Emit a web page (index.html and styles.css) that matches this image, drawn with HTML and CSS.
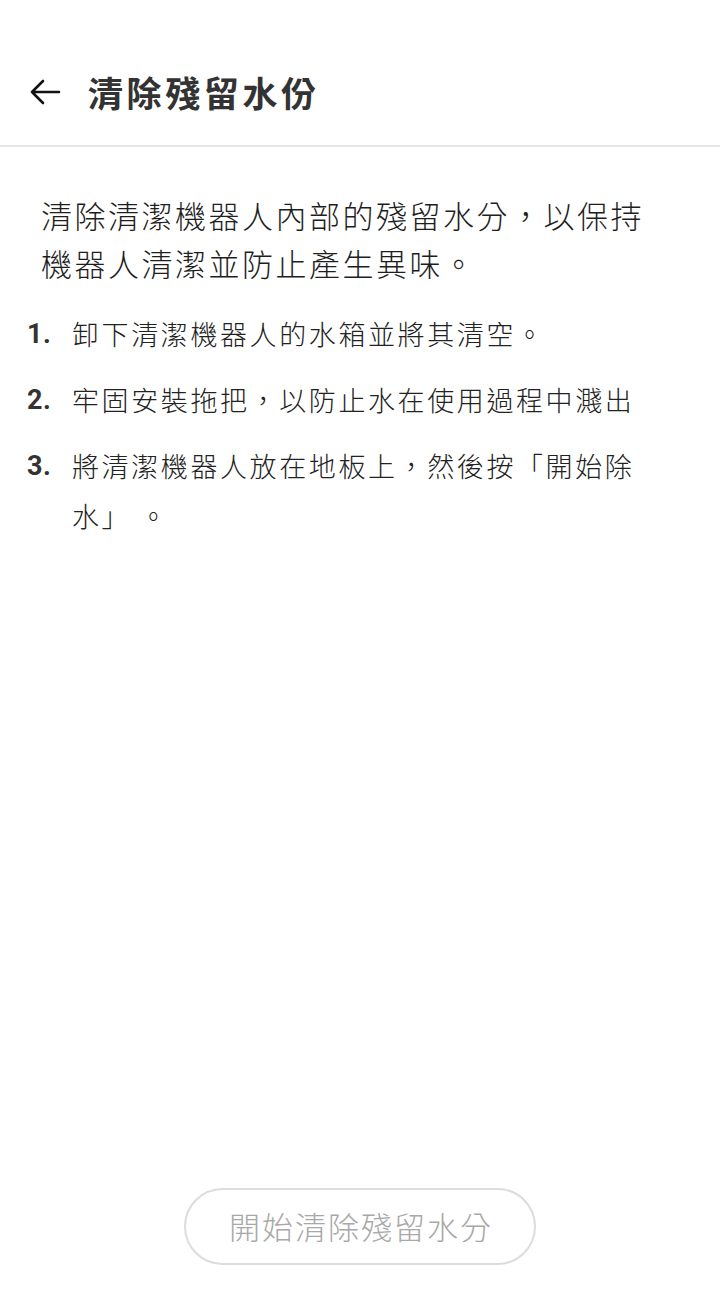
FILE: index.html
```html
<!DOCTYPE html>
<html lang="zh-Hant">
<head>
<meta charset="utf-8">
<link rel="stylesheet" href="styles.css">
</head>
<body>
<div class="page">
  <header class="topbar">
    <svg class="back" width="34" height="34" viewBox="0 0 34 34" aria-hidden="true">
      <path d="M31 17 H4 M15 6 L4 17 L15 28" fill="none" stroke="#111" stroke-width="2.6" stroke-linecap="round" stroke-linejoin="round"/>
    </svg>
    <h1 class="title">清除殘留水份</h1>
  </header>
  <main class="content">
    <p class="intro">清除清潔機器人內部的殘留水分，以保持機器人清潔並防止產生異味。</p>
    <ol class="steps">
      <li class="step"><span class="num">1.</span><span class="text">卸下清潔機器人的水箱並將其清空。</span></li>
      <li class="step"><span class="num">2.</span><span class="text">牢固安裝拖把，以防止水在使用過程中濺出</span></li>
      <li class="step"><span class="num">3.</span><span class="text">將清潔機器人放在地板上，然後按「開始除水」 。</span></li>
    </ol>
  </main>
  <div class="footer">
    <button class="start" type="button">開始清除殘留水分</button>
  </div>
</div>
</body>
</html>
```
FILE: styles.css
```css
* { box-sizing: border-box; }
html, body { margin: 0; padding: 0; background: #fff; }
body {
  font-family: "Noto Sans CJK TC", "Noto Sans", sans-serif;
  color: #222;
}
.page {
  width: 720px;
  height: 1294px;
  display: flex;
  flex-direction: column;
}
.topbar {
  height: 147px;
  border-bottom: 2px solid #e6e6e6;
  display: flex;
  align-items: center;
  padding: 38px 0 0 28px;
}
.back { display: block; }
.title {
  margin: 0 0 0 26px;
  font-size: 35px;
  font-weight: 700;
  letter-spacing: 3.6px;
  color: #333;
  line-height: 1;
}
.content {
  padding: 44px 0 0 0;
}
.intro {
  margin: 0;
  padding: 0 50px 0 41px;
  font-size: 31px;
  font-weight: 300;
  line-height: 48px;
  letter-spacing: 2.5px;
  color: #1e1e1e;
}
.steps {
  list-style: none;
  margin: 22px 0 0 0;
  padding: 0 60px 0 27px;
}
.step {
  display: flex;
  font-size: 27px;
  font-weight: 300;
  line-height: 50px;
  letter-spacing: 2.6px;
  color: #222;
  margin-bottom: 16px;
}
.num {
  flex: 0 0 45px;
  font-family: "Roboto", "Liberation Sans", sans-serif;
  font-size: 27px;
  font-weight: 700;
  letter-spacing: 0.5px;
  color: #333;
}
.text { flex: 1; }
.footer {
  margin-top: auto;
  display: flex;
  justify-content: center;
  padding-bottom: 29px;
}
.start {
  width: 352px;
  height: 77px;
  border: 2px solid #dcdcdc;
  border-radius: 39px;
  background: #fff;
  font-family: "Noto Sans CJK TC", "Noto Sans", sans-serif;
  font-size: 31px;
  font-weight: 300;
  letter-spacing: 2px;
  color: #a8a8a8;
  padding: 0 0 2px 2px;
}
```
